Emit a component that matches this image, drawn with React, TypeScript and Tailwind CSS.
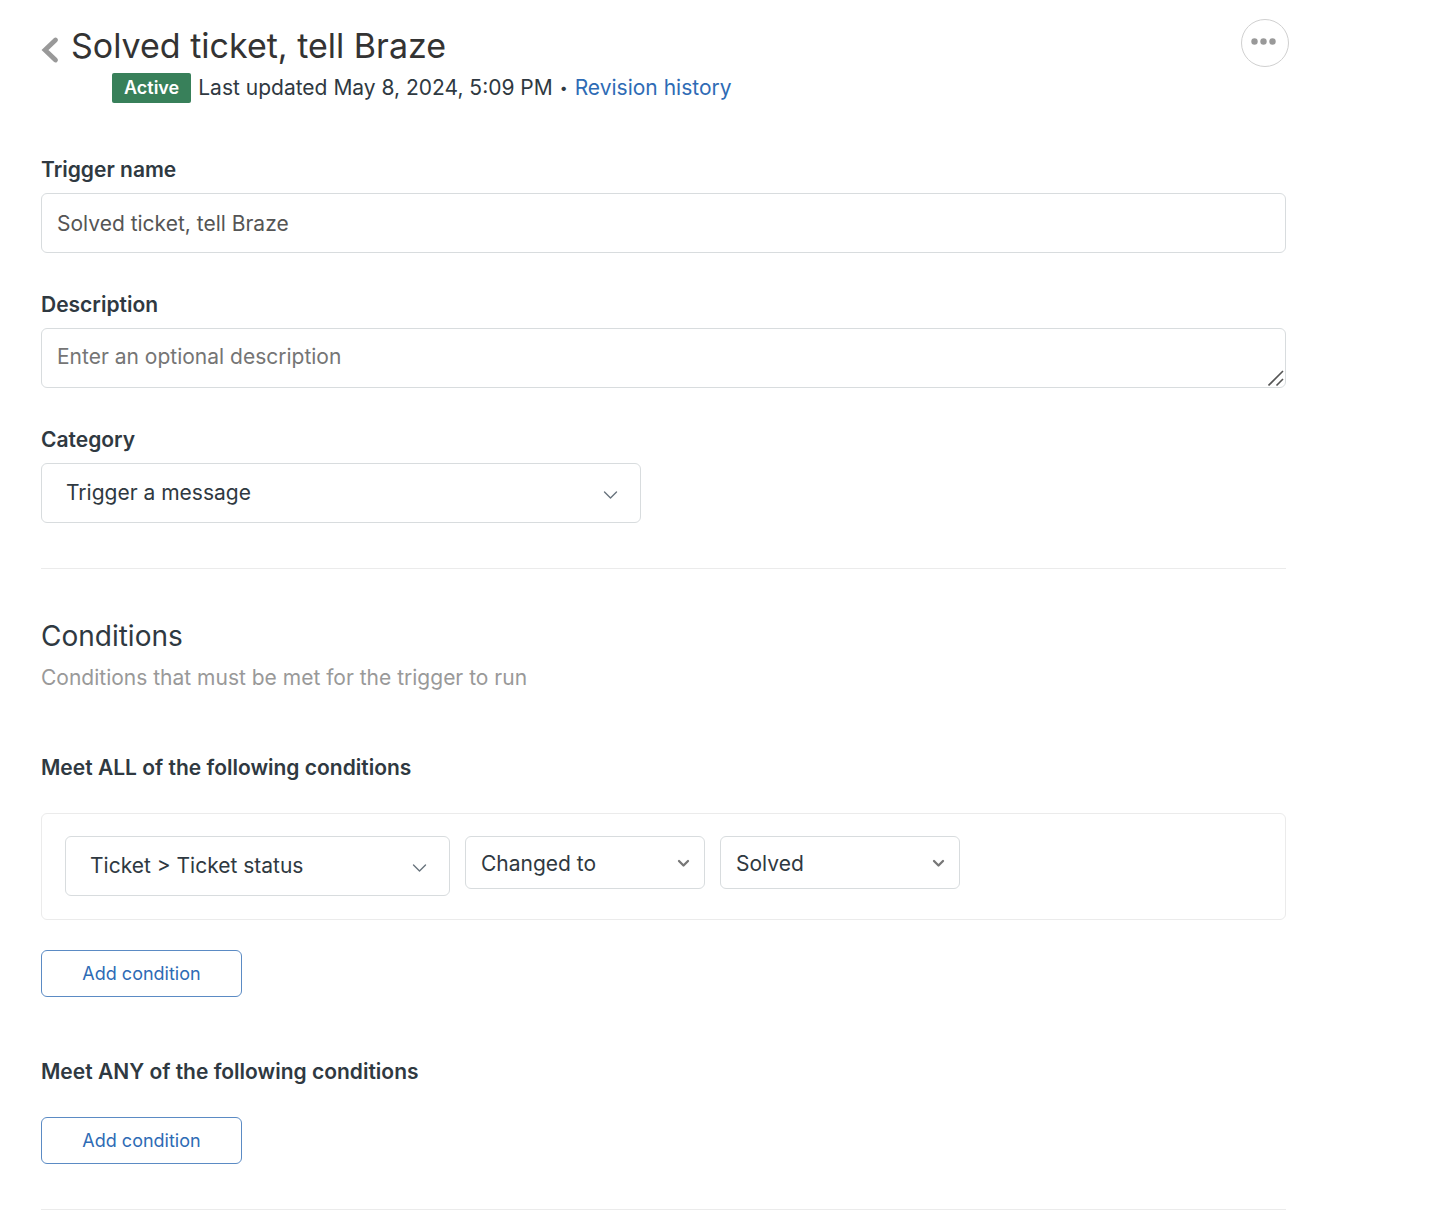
import { ReactNode } from "react";

function ChevronThin() {
  return (
    <span className="pointer-events-none absolute inset-y-0 right-[22px] flex items-center pt-1">
      <svg className="h-4 w-4" viewBox="0 0 16 16" fill="none" stroke="#68737d" strokeWidth="1.4" strokeLinecap="round" strokeLinejoin="round">
        <path d="M1.500 5l6 6 6-6" />
      </svg>
    </span>
  );
}

function ChevronBold() {
  return (
    <span className="pointer-events-none absolute inset-y-0 right-[13px] flex items-center">
      <svg className="h-4 w-4" viewBox="0 0 16 16" fill="none" stroke="#777" strokeWidth="2.3" strokeLinecap="round" strokeLinejoin="round">
        <path d="M3 6l4.500 4.500L12 6" />
      </svg>
    </span>
  );
}

function LargeSelect({ id, value, label }: { id: string; value: string; label?: string }) {
  return (
    <div className="relative">
      <select
        id={id}
        aria-label={label}
        defaultValue={value}
        className="h-[60px] w-full appearance-none rounded-[6px] border border-[#d8dcde] bg-white pl-6 pr-12 text-[21px] text-[#2f3941] outline-none"
      >
        <option>{value}</option>
      </select>
      <ChevronThin />
    </div>
  );
}

function SmallSelect({ id, value, label }: { id: string; value: string; label: string }) {
  return (
    <div className="relative w-60">
      <select
        id={id}
        aria-label={label}
        defaultValue={value}
        className="h-[53px] w-full appearance-none rounded-[6px] border border-[#d8dcde] bg-white pl-[15px] pr-10 pt-0.5 text-[21px] text-[#2f3941] outline-none"
      >
        <option>{value}</option>
      </select>
      <ChevronBold />
    </div>
  );
}

function Label({ htmlFor, children }: { htmlFor: string; children: ReactNode }) {
  return (
    <label htmlFor={htmlFor} className="mb-[9px] block text-[21px] font-semibold leading-7">
      {children}
    </label>
  );
}

function AddCondition() {
  return (
    <button type="button" className="h-[47px] w-[201px] rounded-[6px] border border-[#5b8bc4] bg-white text-[18px] text-[#2e6bb5]">
      Add condition
    </button>
  );
}

export default function App() {
  return (
    <main className="min-h-screen bg-white pl-[41px] pr-[146px] pt-[19px] font-['Inter',sans-serif] text-[#2f3941]">
      <header className="flex items-start justify-between">
        <div>
          <div className="flex items-center gap-3">
            <button type="button" aria-label="Back" className="mt-2">
              <svg className="h-7 w-[18px]" viewBox="0 0 18 28" fill="none" stroke="#999" strokeWidth="4.800" strokeLinecap="round">
                <path d="M14.500 4L4 14l10.500 10" strokeLinejoin="miter" />
              </svg>
            </button>
            <h1 className="text-[34px] leading-[54px] text-[#333]">Solved ticket, tell Braze</h1>
          </div>
          <div className="ml-[71px] flex items-center text-[21px] leading-[30px]">
            <span className="mr-[7px] rounded-[2px] bg-[#38805a] px-3 text-[18px] font-semibold text-white">Active</span>
            <span>Last updated May 8, 2024, 5:09 PM</span>
            <span className="mx-[7px] text-[14px]">•</span>
            <a href="#history" className="text-[#2e6bb5]">Revision history</a>
          </div>
        </div>
        <button type="button" aria-label="More options" className="-mr-[3px] flex h-12 w-12 items-center justify-center rounded-full border border-[#d0d0d0]">
          <svg className="h-6 w-7" viewBox="0 0 28 24" fill="#999">
            <circle cx="3.500" cy="10.500" r="3.200" />
            <circle cx="12.500" cy="10.500" r="3.200" />
            <circle cx="21.500" cy="10.500" r="3.200" />
          </svg>
        </button>
      </header>

      <section className="mt-[53px]">
        <Label htmlFor="name">Trigger name</Label>
        <input
          id="name"
          defaultValue="Solved ticket, tell Braze"
          className="block h-[60px] w-full rounded-[6px] border border-[#d8dcde] px-[15px] text-[21px] text-[#555] outline-none"
        />
      </section>

      <section className="mt-[38px]">
        <Label htmlFor="description">Description</Label>
        <div className="relative">
          <textarea
            id="description"
            rows={1}
            placeholder="Enter an optional description"
            className="block h-[60px] w-full resize-none overflow-hidden rounded-[6px] border border-[#d8dcde] px-[15px] py-3 text-[21px] leading-8 outline-none placeholder:text-[#757575]"
          />
          <svg className="pointer-events-none absolute bottom-0.5 right-0.5 h-4 w-4" viewBox="0 0 16 16" fill="none" stroke="#555" strokeWidth="1.600">
            <path d="M0.500 15.500L15 1M8.500 15.500L15 9" />
          </svg>
        </div>
      </section>

      <section className="mt-[38px]">
        <Label htmlFor="category">Category</Label>
        <div className="w-[600px] max-w-full">
          <LargeSelect id="category" value="Trigger a message" />
        </div>
      </section>

      <section className="mt-[45px] border-t border-[#ebebeb] pt-[46px]">
        <h2 className="text-[28px] leading-[42px]">Conditions</h2>
        <p className="mt-1 text-[21px] leading-[34px] text-[#999]">Conditions that must be met for the trigger to run</p>

        <h3 className="mt-[59px] text-[21px] font-semibold leading-7">Meet ALL of the following conditions</h3>
        <div className="mt-[31px] flex flex-wrap items-start gap-[15px] rounded-[6px] border border-[#ebebeb] px-[23px] pb-[23px] pt-[22px]">
          <div className="w-[385px]">
            <LargeSelect id="field" label="Field" value="Ticket > Ticket status" />
          </div>
          <SmallSelect id="operator" label="Operator" value="Changed to" />
          <SmallSelect id="value" label="Value" value="Solved" />
        </div>
        <div className="mt-[30px] flex">
          <AddCondition />
        </div>

        <h3 className="mt-[61px] text-[21px] font-semibold leading-7">Meet ANY of the following conditions</h3>
        <div className="mt-[31px] flex">
          <AddCondition />
        </div>
      </section>
      <hr className="mt-[45px] border-[#ebebeb]" />
    </main>
  );
}
